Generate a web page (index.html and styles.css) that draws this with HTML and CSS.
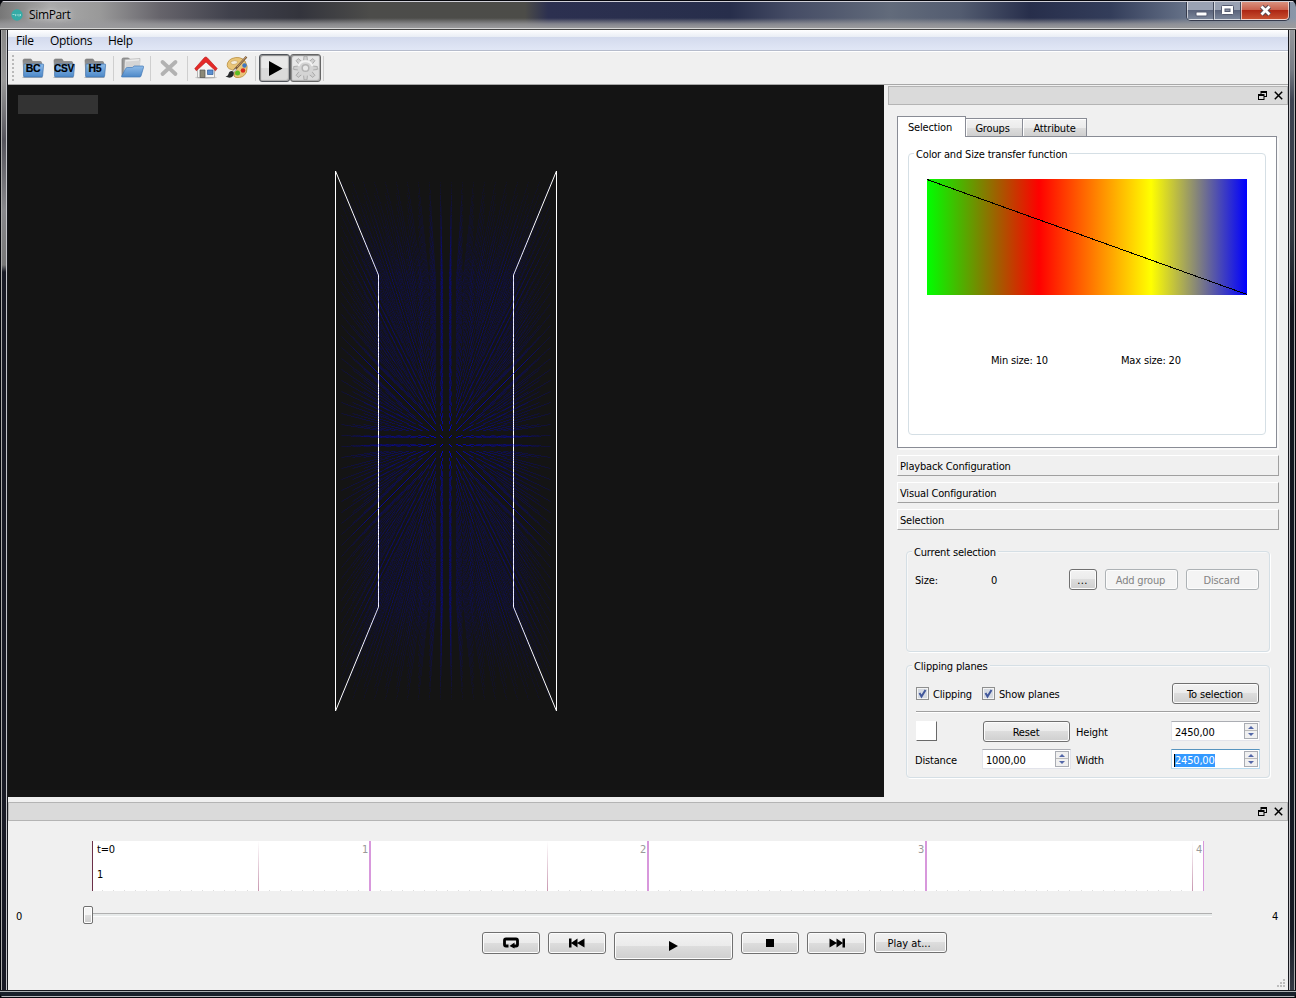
FILE: index.html
```html
<!DOCTYPE html>
<html lang="en">
<head>
<meta charset="utf-8">
<title>SimPart</title>
<link rel="stylesheet" href="styles.css">
</head>
<body>
<svg width="0" height="0" class="defs">
  <defs>
    <linearGradient id="blue" x1="0" y1="0" x2="0" y2="1"><stop offset="0" stop-color="#90bce8"/><stop offset="1" stop-color="#4c88c8"/></linearGradient>
    <linearGradient id="grey" x1="0" y1="0" x2="0" y2="1"><stop offset="0" stop-color="#858585"/><stop offset="1" stop-color="#b0b0b0"/></linearGradient>
    <symbol id="folder" viewBox="0 0 24 24">
      <path d="M2 4.500q0-1.500 1.500-1.500h6q1 0 1.500 1.500l.5 1h8q1 0 1 1v13H3z" fill="url(#grey)" stroke="#777" stroke-width=".6"/>
      <path d="M1.500 21.500h20" stroke="#777" stroke-opacity=".5"/>
      <path d="M3 8.500q0-.5 1-.5h18q.7 0 .6 1l-1 11q-.1 1-1 1H3.500q-1 0-.9-1z" fill="url(#blue)" stroke="#3f74b0" stroke-width=".7"/>
    </symbol>
    <symbol id="float" viewBox="0 0 9 9"><path d="M3 0h5.500v2H3zM2.500 0h1v3h-1zM8 0h1v5.500H8zM6 5h3v1H6zM0 3h6.500v2H0zM0 4h1v5H0zM5.500 4h1v5h-1zM0 8h6.500v1H0z"/></symbol>
    <symbol id="cross" viewBox="0 0 9 9"><path d="M.8.800l7.400 7.400M8.200.800L.8 8.200" stroke="#000" stroke-width="1.500"/></symbol>
  </defs>
</svg>
<div class="window">
  <header class="titlebar">
    <svg class="app-icon" viewBox="0 0 12 12"><circle cx="6" cy="6" r="5.700" fill="#35aba6"/><path d="M1.500 5.500h2M4.500 5.200v2M5.500 6h1.500M8 5v2.500M9.500 5v2" stroke="#b5e5df" stroke-width=".8"/></svg>
    <span class="title">SimPart</span>
    <div class="controls">
      <span class="ctl"><svg viewBox="0 0 27 19"><rect x="9" y="10" width="11" height="4" rx="1" fill="#fff" stroke="#555b70"/></svg></span>
      <span class="ctl"><svg viewBox="0 0 27 19"><rect x="7.500" y="3.500" width="12" height="9" rx="1" fill="#fff" stroke="#555b70"/><rect x="11" y="7" width="5" height="2.500" fill="#8890a2" stroke="#555b70"/></svg></span>
      <span class="ctl close"><svg viewBox="0 0 47 19"><path d="M20.500 4.500l8 8M28.500 4.500l-8 8" stroke="#574850" stroke-width="4.600"/><path d="M20.500 4.500l8 8M28.500 4.500l-8 8" stroke="#fff" stroke-width="2.800"/></svg></span>
    </div>
  </header>
  <div class="frame-row">
    <div class="edge"></div>
    <main class="client">
      <nav class="menubar"><span class="m1">File</span><span class="m2">Options</span><span class="m3">Help</span></nav>
      <div class="toolbar">
        <i class="grip"></i>
        <span class="tool"><svg><use href="#folder"/><text x="12" y="16">BC</text></svg></span>
        <span class="tool"><svg><use href="#folder"/><text x="12" y="16" textLength="20" lengthAdjust="spacingAndGlyphs">CSV</text></svg></span>
        <span class="tool"><svg><use href="#folder"/><text x="12" y="16">H5</text></svg></span>
        <i class="sep s1"></i>
        <span class="tool"><svg viewBox="0 0 24 24"><path d="M2 3.500q0-1.500 1.500-1.500h5l2 2h9v16H2z" fill="#999" stroke="#777" stroke-width=".7"/><path d="M5 3.500l15-1-1 14H4z" fill="#ececec" stroke="#aaa" stroke-width=".6"/><path d="M6 5.500l14-1v8H5z" fill="#d5d5d5"/><path d="M1.500 20.500l4.200-8q.5-1 1.600-1h5l2-1.500h8.500q1 0 .8 1.200l-2.600 8.800q-.3 1-1.300 1H2.500q-1.200 0-1-.5z" fill="url(#blue)" stroke="#4478b6" stroke-width=".7"/></svg></span>
        <i class="sep s2"></i>
        <span class="tool"><svg viewBox="0 0 24 24"><path d="M5.500 6l13 12M18.500 6l-13 12" stroke="#b2b2b2" stroke-width="3.800" stroke-linecap="round"/></svg></span>
        <i class="sep s3"></i>
        <span class="tool"><svg viewBox="0 0 24 24"><ellipse cx="12" cy="21.500" rx="11" ry="1.500" fill="#ccc"/><path d="M3.500 11L12 4.500 20.500 11v10.500h-17z" fill="#f5f5f3" stroke="#999" stroke-width=".7"/><path d="M.8 12.500L10.500 1.500q1.200-1 2.500 0L23.200 12.500l-1.700 2.300L12 6 2.300 14.800z" fill="#e42a28" stroke="#b71515" stroke-width=".6"/><path d="M6 14h5v7.500H6z" fill="#8b8977" stroke="#555" stroke-width=".7"/><path d="M13.500 14h5.500v4.500h-5.500z" fill="#5b8fd0" stroke="#2e5b9c" stroke-width=".7"/></svg></span>
        <span class="tool pal"><svg viewBox="0 0 24 24"><path d="M7 2.500q8-3 13 2.500 3.500 5 1.500 11-3 6.500-10.500 5.500-3.500-1-1.500-4 1-3-3-4Q1 12.500 2.500 7 4 3.500 7 2.500z" fill="#e9c578" stroke="#b98d3c" stroke-width=".8"/><path d="M6 5.500q4-2 7 0-1 3-4 3-4 0-3-3z" fill="#f4ecdb" stroke="#c39b50" stroke-width=".6"/><circle cx="19.500" cy="9.500" r="2.200" fill="#3f78c2"/><circle cx="18" cy="14.500" r="2.300" fill="#d8291e"/><circle cx="12.500" cy="17" r="2.500" fill="#5ebc23"/><path d="M21.500.8L9 14.500" stroke="#76583a" stroke-width="2.200"/><path d="M21 1L12 11" stroke="#c79a63"/><path d="M10.500 12.500l-3 2.500 1 1.500 3-2.500z" fill="#ddd" stroke="#888" stroke-width=".4"/><path d="M7 15q-3 0-3.500 3-.5 2-3 2.500 5 2.500 7.500-.5 1.500-2 .5-4z" fill="#26292b"/></svg></span>
        <i class="sep s4"></i>
        <span class="toggle"><svg viewBox="0 0 29 25"><path d="M9 6L22.500 13.500 9 21z"/></svg></span>
        <span class="toggle"><svg viewBox="0 0 29 25"><g transform="translate(14.500 13)"><g fill="#d0d0d0" stroke="#a2a2a2" stroke-width=".8"><g id="cog"><path id="tooth" d="M-2-7l.5-4.800h3l.5 4.800z"/><use href="#tooth" transform="rotate(45)"/><use href="#tooth" transform="rotate(90)"/><use href="#tooth" transform="rotate(135)"/></g><use href="#cog" transform="rotate(180)"/></g><circle r="8" fill="#d4d4d4"/><path d="M-7-2A7.500 7.500 0 0 1 7-2" fill="none" stroke="#f2f2f2" stroke-width="2"/><circle r="3.300" fill="#e8e8e8" stroke="#b3b3b3" stroke-width="1.500"/></g></svg></span>
        <i class="sep s5"></i>
      </div>
      <section class="upper">
        <div class="viewport"><canvas id="scene" width="876" height="712"></canvas><div class="hud"></div></div>
        <aside class="dock">
          <div class="dock-title"><svg><use href="#float"/></svg><svg><use href="#cross"/></svg></div>
          <div class="dock-body">
            <div class="tabs"><span class="tab active">Selection</span><span class="tab t2">Groups</span><span class="tab t3">Attribute</span></div>
            <div class="pane">
              <div class="group transfer">
                <span class="legend">Color and Size transfer function</span>
                <div class="ramp"><svg viewBox="0 0 320 116"><path d="M0 .5L320 115.500" stroke="#000" shape-rendering="crispEdges"/></svg></div>
                <div class="sizes"><span>Min size: 10</span><span>Max size: 20</span></div>
              </div>
            </div>
            <div class="bar">Playback Configuration</div>
            <div class="bar">Visual Configuration</div>
            <div class="bar">Selection</div>
            <div class="group current">
              <span class="legend">Current selection</span>
              <div class="size-row"><span>Size:</span><span>0</span><span class="btn">...</span><span class="btn off">Add group</span><span class="btn off">Discard</span></div>
            </div>
            <div class="group clip">
              <span class="legend">Clipping planes</span>
              <div class="check-row">
                <i class="check"><svg viewBox="0 0 11 11"><path d="M2.500 5l2 3.500L8.500 2" fill="none" stroke="#41579b" stroke-width="2"/></svg></i><span>Clipping</span>
                <i class="check"><svg viewBox="0 0 11 11"><path d="M2.500 5l2 3.500L8.500 2" fill="none" stroke="#41579b" stroke-width="2"/></svg></i><span>Show planes</span>
                <span class="btn">To selection</span>
              </div>
              <hr>
              <div class="fields">
                <i class="swatch"></i><span class="btn reset">Reset</span><span class="label">Height</span>
                <div class="spin"><span>2450,00</span><i class="arrows"><b></b><b></b></i></div>
                <span class="label">Distance</span>
                <div class="spin"><span>1000,00</span><i class="arrows"><b></b><b></b></i></div>
                <span class="label">Width</span>
                <div class="spin focus"><span>2450,00</span><i class="arrows"><b></b><b></b></i></div>
              </div>
            </div>
          </div>
        </aside>
      </section>
      <section class="lower">
        <div class="dock-title"><svg><use href="#float"/></svg><svg><use href="#cross"/></svg></div>
        <div class="timeline">
          <div class="now"><span>t=0</span><span>1</span></div>
          <i class="event e1"></i><span class="step">1</span><i class="mark"></i>
          <i class="event e2"></i><span class="step">2</span><i class="mark"></i>
          <span class="step">3</span><i class="mark"></i>
          <i class="event e3"></i><span class="step last">4</span><i class="mark end"></i>
        </div>
        <div class="slider"><span class="from">0</span><i class="handle"></i><i class="groove"></i><span class="to">4</span></div>
        <div class="transport">
          <span class="btn w58"><svg viewBox="0 0 18 12"><path d="M6.500 9H4Q2.500 9 2.500 7.500v-4Q2.500 2 4 2h10q1.500 0 1.500 1.500v4Q15.500 9 14 9h-2.500" fill="none" stroke="#000" stroke-width="2.800"/><path d="M12.500 5.500v6L7.500 9z"/></svg></span>
          <span class="btn w58"><svg viewBox="0 0 18 12"><path d="M1 1.500h2.500v9H1zM9.500 1.500v9L3 6zM16.500 1.500v9L9 6z"/></svg></span>
          <span class="btn play"><svg viewBox="0 0 18 12"><path d="M5 1l9 5-9 5z"/></svg></span>
          <span class="btn w58"><svg viewBox="0 0 18 12"><path d="M5 2h8v8H5z"/></svg></span>
          <span class="btn w59"><svg viewBox="0 0 18 12"><path d="M14.500 1.500H17v9h-2.500zM8.500 1.500v9L15 6zM1.500 1.500v9L9 6z"/></svg></span>
          <span class="btn at">Play at...</span>
        </div>
        <svg class="sizegrip" viewBox="0 0 9 9"><path d="M7 1h2M7 4h2M7 7h2M4 4h2M4 7h2M1 7h2" stroke="#bdbdbd" stroke-width="2"/></svg>
      </section>
    </main>
    <div class="edge right"></div>
  </div>
  <div class="bottom-edge"></div>
</div>
<script src="scene.js"></script>
</body>
</html>
```
FILE: styles.css
```css
* { box-sizing: border-box; }
body { margin: 0; background: #05060c; overflow: hidden; font: 11px/13px "DejaVu Sans Condensed", "DejaVu Sans", sans-serif; font-stretch: condensed; letter-spacing: -.17px; color: #000; white-space: nowrap; }
i { display: block; font-style: normal; }
svg { display: block; }
.defs { position: absolute; }
.window { width: 1296px; height: 998px; display: flex; flex-direction: column; border-radius: 7px 7px 5px 5px; overflow: hidden; }
.titlebar { height: 30px; flex: none; display: flex; align-items: flex-start; padding: 1px 6px 0 11px; border-bottom: 1px solid #444; border-top: 1px solid #05060c;
  background: linear-gradient(#d0d0d8 0 1px, transparent 1px 17px, #9a9a9dcc 23px, #9a9a9c 27px, #d6d6d6 27px), linear-gradient(90deg, #777 0, #aaa 50px, #999 100px, #66646b 160px, #40414c 230px, #33343c 300px, #4c4c4a 370px, #4c4c48 525px, #2c3050 548px, #272e4b 730px, #454c65 790px, #626b7b 890px, #535c70 960px, #272e4b 1030px, #333d5a 1110px, #68748a 1190px, #8996a8 1296px); }
.app-icon { width: 12px; height: 12px; margin-top: 7px; }
.title { font: 12px/16px "Open Sans", sans-serif; letter-spacing: -.35px; margin: 5px 0 0 6px; text-shadow: 0 0 5px #fff8, 0 0 9px #fff8; }
.controls { margin-left: auto; display: flex; height: 19px; border: 1px solid #353a4c; border-top: 0; border-radius: 0 0 5px 5px; overflow: hidden; }
.ctl { width: 27px; border: 1px solid #ffffffa0; border-top: 0; border-right-color: #454b5c; background: linear-gradient(#9aa2b3 0 8px, #59627a 8px, #7a8599); }
.ctl svg { width: 27px; height: 19px; margin-left: -1px; }
.ctl.close { width: 48px; background: linear-gradient(#d9917e 0, #c9604c 8px, #ac2412 8px, #c74f30); border-right-color: #ffffffa0; border-radius: 0 0 4px 0; }
.ctl.close svg { width: 47px; }
.frame-row { display: flex; height: 960px; }
.edge { width: 8px; background: linear-gradient(90deg, #05060c 0 1px, #aaa 1px 2px, transparent 2px 6px, #c4c4c8 6px 7px, #15171d 7px), linear-gradient(#888 0, #999 50px, #55545c 110px, #88888c 180px, #777 235px, #181a25 242px); }
.edge.right { background: linear-gradient(90deg, #15171d 0 1px, #c4c4c8 1px 2px, transparent 2px 6px, #aaa 6px 7px, #05060c 7px), linear-gradient(#95989c 0, #777c84 40px, #3d4351 70px, #343a43 200px, #12161e 280px, #161b24 900px, #343944); }
.bottom-edge { height: 8px; background: linear-gradient(#15171d 0 1px, #aaafb1 1px 2px, #18202a 2px 6px, #b5b7bb 6px 7px, #05060c 7px); }
.client { width: 1280px; display: flex; flex-direction: column; background: #f0f0f0; }
.menubar { height: 22px; display: flex; font: 12px/22px "Open Sans", sans-serif; letter-spacing: -.3px; padding-left: 8px; background: linear-gradient(#fff 0, #e9edf5 7px, #d3daed 7px, #e1e7f6 20px, #b6bccc 20px 21px, #fff 21px); }
.m1 { width: 34px; } .m2 { width: 58px; }
.toolbar { height: 33px; display: flex; align-items: center; border-bottom: 1px solid #a8a8a8; }
.grip { width: 2px; height: 27px; margin: 0 3px 0 4px; background: repeating-linear-gradient(#b9b9b9 0 2px, transparent 2px 4px); }
.tool { width: 31px; height: 24px; display: flex; justify-content: center; }
.tool svg { width: 24px; height: 24px; }
.tool text { font: bold 10.500px "Liberation Sans", sans-serif; text-anchor: middle; letter-spacing: -.3px; stroke: #000; stroke-width: .2; }
.sep { width: 1px; height: 25px; background: #cfcfcf; }
.s1 { margin: 0 2px 0 3px; } .s2 { margin: 0 2px 0 3px; } .s3 { margin: 0 2px 0 3px; } .s4 { margin: 0 3px 0 3px; } .s5 { margin-left: 2px; }
.toggle { width: 31px; height: 28px; border: 1px solid #50545a; border-radius: 3px; background: linear-gradient(#e8e8e8 0 13px, #dadada 13px); box-shadow: inset 1px 1px 1px #888, inset -1px -1px 1px #aaa; }
.toggle + .toggle { border-color: #666; }
.toggle svg { width: 29px; height: 25px; }
.upper { display: flex; height: 712px; gap: 4px; }
.viewport { width: 876px; position: relative; background: #141414; }
.viewport canvas { display: block; }
.hud { position: absolute; left: 10px; top: 10px; width: 80px; height: 19px; background: #333; }
.dock { width: 400px; padding-top: 1px; }
.dock-title { height: 19px; display: flex; justify-content: flex-end; align-items: center; gap: 7px; padding-right: 4px; background: #dadada; border: 1px solid #b4b4b4; }
.dock-title svg { width: 9px; height: 9px; }
.dock-body { padding: 11px 9px 0; display: flex; flex-direction: column; }
.tabs { display: flex; align-items: flex-end; height: 20px; z-index: 1; }
.tab { height: 18px; border: 1px solid #898c95; border-bottom: 0; background: linear-gradient(#f3f3f3, #ebebeb 9px, #ddd 9px, #cfcfcf); box-shadow: inset 1px 1px #fff; text-align: center; line-height: 19px; }
.tab.active { width: 69px; height: 21px; margin-bottom: -1px; background: #fff; line-height: 21px; padding-right: 3px; }
.t2 { width: 57px; border-left: 0; padding-right: 3px; } .t3 { width: 64px; border-left: 0; }
.pane { width: 380px; height: 312px; border: 1px solid #898c95; background: #fff; padding: 16px 10px 0; box-shadow: 2px 2px #f9f9f9; }
.group { border: 1px solid #d5dfe5; border-radius: 4px; box-shadow: inset 1px 1px #fff8, 1px 1px #fff; display: flex; flex-direction: column; }
.legend { align-self: flex-start; height: 13px; margin: -6px 0 0 5px; padding: 0 2px; background: #f0f0f0; }
.transfer { height: 282px; } .transfer .legend { background: #fff; }
.ramp { width: 320px; height: 116px; margin: 18px 0 0 18px; background: linear-gradient(90deg, #0f0, #f00 35%, #ff0 70%, #00f); }
.ramp svg { width: 320px; height: 116px; }
.sizes { display: flex; margin: 59px 0 0 82px; } .sizes span { width: 130px; }
.bar { width: 382px; height: 21px; line-height: 21px; padding-left: 2px; margin-bottom: 6px; border: 1px solid #fff; border-right-color: #a0a0a0; border-bottom-color: #a0a0a0; }
.pane + .bar { margin-top: 7px; }
.current { width: 364px; height: 101px; margin: 15px 0 0 9px; }
.size-row { display: flex; align-items: center; margin: 10px 0 0 8px; }
.size-row > span:first-child { width: 76px; padding-top: 1px; } .size-row > span:nth-child(2) { width: 78px; padding-top: 1px; }
.btn { height: 21px; border: 1px solid #707070; border-radius: 3px; box-shadow: inset 0 0 0 1px #fcfcfc; background: linear-gradient(#f2f2f2, #ebebeb 50%, #ddd 50%, #cfcfcf); display: flex; justify-content: center; align-items: center; padding: 1px 1px 0 0; }
.btn.off { width: 73px; margin-left: 8px; color: #838383; border-color: #adb2b5; background: #f4f4f4; padding-right: 2px; }
.size-row .btn:nth-child(3) { width: 28px; letter-spacing: .3px; }
.clip { width: 364px; height: 113px; margin: 13px 0 0 9px; }
.check-row { display: flex; align-items: center; margin: 10px 10px 0 9px; }
.check { width: 13px; height: 13px; border: 1px solid #8e8f8f; background: #d5dae2; box-shadow: inset 0 0 0 1px #f4f4f4; margin-right: 4px; }
.check svg { width: 11px; height: 11px; }
.check + span { width: 49px; padding-top: 1px; } .check-row .btn { width: 87px; margin-left: auto; }
hr { width: 344px; height: 2px; border: 0; margin: 7px 0 8px 9px; background: linear-gradient(#a0a0a0 0 1px, #fff 1px); }
.fields { display: grid; grid-template-columns: 67px 94px 95px 89px; grid-template-rows: 21px 21px; row-gap: 7px; align-items: center; padding-left: 8px; }
.label { padding-top: 2px; }
.swatch { width: 21px; height: 20px; margin-left: 1px; align-self: start; background: #fff; border: 1px solid #fff; border-right: 1px solid #696969; border-bottom: 1px solid #696969; }
.reset { width: 87px; margin-left: 1px; }
.spin { width: 89px; height: 20px; display: flex; align-items: center; justify-content: space-between; background: #fff; border: 1px solid #e2e3ea; border-top-color: #abadb3; padding: 0 1px 0 3px; align-self: start; }
.spin span { letter-spacing: -.2px; margin-top: 2px; }
.focus { border-color: #b7d9ed; border-top-color: #5794bf; padding-left: 3px; } .focus span { background: #39f; color: #fff; box-shadow: -1px 0 #000; }
.arrows { width: 14px; height: 16px; border: 1px solid #a9acb3; display: grid; place-items: center; background: linear-gradient(#f0f0f0 0 6px, #bbb 6px 7px, #f0f0f0 7px); }
.arrows b { border: 3px solid transparent; border-bottom: 3px solid #5367a8; border-top: 0; width: 0; height: 0; }
.arrows b + b { border-bottom: 0; border-top: 3px solid #5367a8; }
.lower { padding-top: 5px; height: 193px; display: flex; flex-direction: column; position: relative; }
.timeline { margin: 20px 0 0 84px; width: 1112px; height: 50px; display: flex; background: repeating-linear-gradient(90deg, transparent 0 10px, #ddd 10px 11px, transparent 11px 11.120px) 0 100% / 100% 1px no-repeat #fff; }
.now { width: 166px; border-left: 1px solid #6b3048; padding: 2px 0 0 4px; } .now span { display: block; height: 25px; }
.event { width: 1px; background: linear-gradient(#fff, #c898b0); }
.step { padding-top: 2px; padding-right: 1px; color: #999; text-align: right; }
.e1 + .step { width: 110px; } .mark { width: 2px; background: #d898dc; }
.e2 { margin-left: 176px; } .e2 + .step { width: 99px; } .mark + .step { width: 276px; } .e3 { margin-left: 265px; } .e3 + .step { width: 10px; } .end { width: 1px; }
.slider { display: flex; height: 18px; margin-top: 15px; padding-left: 8px; align-items: flex-start; }
.from { width: 67px; padding-top: 4px; }
.handle { width: 10px; height: 18px; border: 1px solid #707070; border-radius: 2px; background: linear-gradient(#f4f4f4 50%, #ddd 50%, #ccc); box-shadow: inset 0 0 0 1px #fff; }
.groove { width: 1119px; height: 4px; margin-top: 7px; background: linear-gradient(#b0b0b0 0 1px, #e7eaea 1px 3px, #fcfcfc 3px); }
.to { padding: 4px 0 0 60px; }
.transport { display: flex; gap: 8px; margin: 8px 0 0 474px; }
.transport .btn { height: 22px; padding: 0; } .transport svg { width: 18px; height: 12px; }
.w58 { width: 58px; } .w59 { width: 59px; } .transport .play { width: 119px; height: 28px; padding-right: 1px; } .transport .at { width: 73px; height: 21px; padding: 1px 3px 0 0; letter-spacing: 0; }
.sizegrip { position: absolute; right: 3px; bottom: 2px; width: 9px; height: 9px; }
```
FILE: scene.js
```javascript
// Perspective view down a regular particle lattice, enclosed by its clipping planes.
const ctx = document.getElementById('scene').getContext('2d');
const cx = 438, cy = 356;
ctx.strokeStyle = '#fff';
ctx.lineWidth = 1;
for (const s of [-1, 1]) {
  ctx.beginPath();
  ctx.moveTo(cx + s * 110.500, cy - 270);
  ctx.lineTo(cx + s * 67.500, cy - 166);
  ctx.lineTo(cx + s * 67.500, cy + 166);
  ctx.lineTo(cx + s * 110.500, cy + 270);
  ctx.closePath();
  ctx.stroke();
}
ctx.fillStyle = 'rgba(0,0,255,0.075)';
const layers = 100, far = 0.615, pitch = 11;
for (let k = 0; k < layers; k++) {
  const scale = 1 - (1 - far) * Math.pow(k / (layers - 1), 0.9);
  for (let i = -10; i < 10; i++)
    for (let j = -24; j < 24; j++)
      ctx.fillRect(Math.floor(cx + (i + 0.5) * pitch * scale), Math.floor(cy + (j + 0.5) * pitch * scale), 1, 1);
}
```
